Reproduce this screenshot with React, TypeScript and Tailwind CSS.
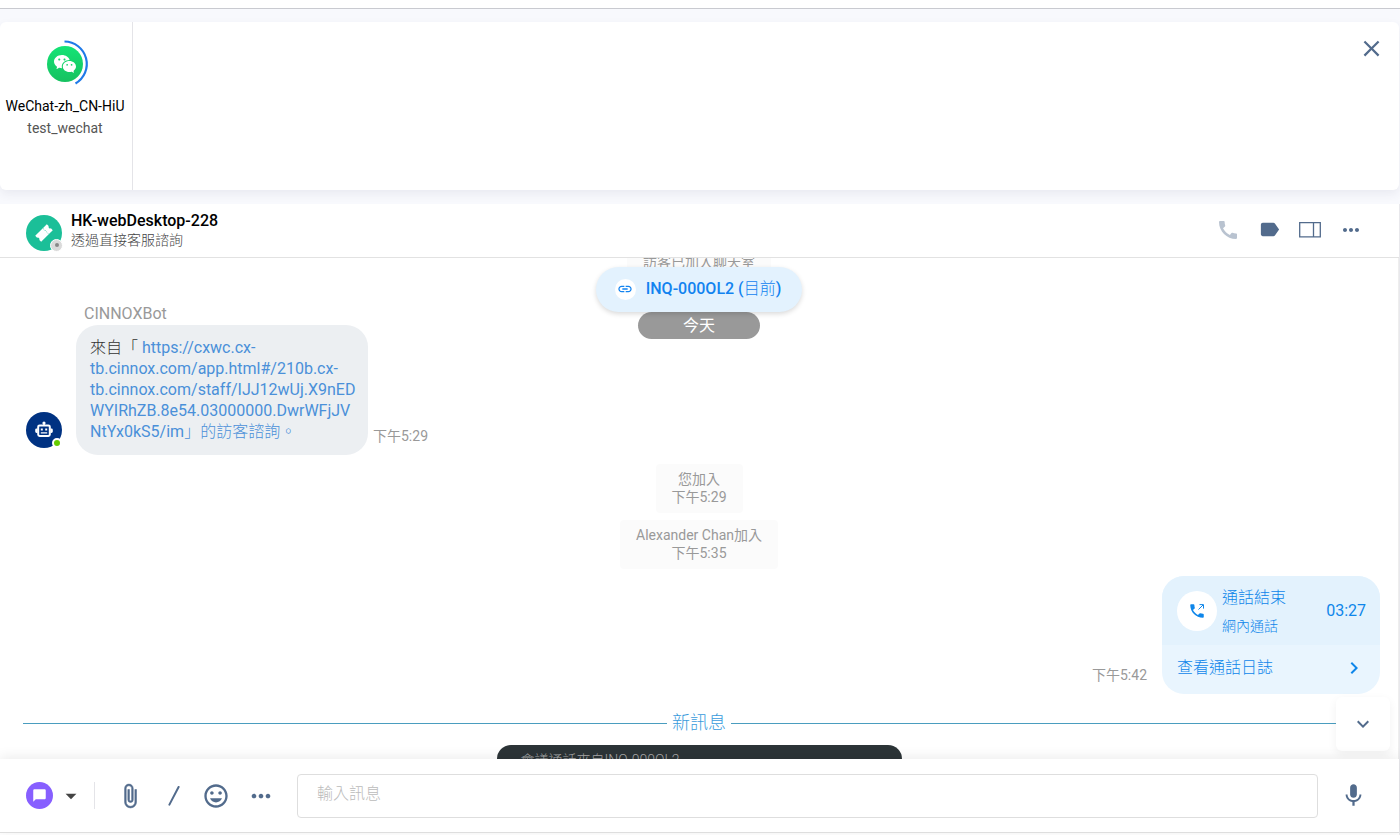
import type { FC, ReactNode } from "react";
import {
  MdArrowDropDown,
  MdCall,
  MdChatBubble,
  MdChevronRight,
  MdClose,
  MdKeyboardArrowDown,
  MdLabel,
  MdLink,
  MdMic,
  MdMoreHoriz,
  MdOutlineMood,
  MdPhone,
} from "react-icons/md";
import { RiWechatFill } from "react-icons/ri";

const IconButton: FC<{ label: string; className?: string; children: ReactNode }> = ({
  label,
  className = "",
  children,
}) => (
  <button
    type="button"
    aria-label={label}
    className={`flex shrink-0 items-center justify-center text-[#526b8c] ${className}`}
  >
    {children}
  </button>
);

const BotIcon: FC = () => (
  <svg width="20" height="20" viewBox="0 0 20 20" fill="none" aria-hidden="true">
    <circle cx="10" cy="3" r="1.6" fill="#fff" />
    <path d="M10 3v3" stroke="#fff" strokeWidth="1.6" />
    <rect x="4.2" y="5.4" width="11.6" height="10.6" rx="1.4" stroke="#fff" strokeWidth="2" />
    <path d="M3.6 8.4H2.6a1.4 1.4 0 0 0-1.4 1.4v1.8A1.4 1.4 0 0 0 2.6 13h1zM16.4 8.4h1a1.4 1.4 0 0 1 1.4 1.4v1.8a1.4 1.4 0 0 1-1.4 1.4h-1z" fill="#fff" />
    <path d="M6.8 8.4h2v2h-2zM11.2 8.4h2v2h-2zM6.8 12.2h6.4v1.4H6.8z" fill="#fff" />
  </svg>
);

const TicketIcon: FC = () => (
  <svg width="20" height="20" viewBox="0 0 20 20" aria-hidden="true">
    <g transform="rotate(-45 10 10)">
      <path d="M1.8 5.8h16.4v2.6a1.7 1.7 0 0 0 0 3.2v2.6H1.8v-2.6a1.7 1.7 0 0 0 0-3.2z" fill="#fff" />
      <path d="M12.6 6.4v7.2" stroke="#1bbf98" strokeWidth=".7" strokeDasharray="1.2 1" />
    </g>
  </svg>
);

const PanelIcon: FC = () => (
  <svg width="22" height="16" viewBox="0 0 22 16" fill="none" stroke="currentColor" aria-hidden="true">
    <path d="M.7.7h20.6v14.1H.7zM14.5.7v14.1" strokeWidth="1.3" />
  </svg>
);

const ClipIcon: FC = () => (
  <svg width="26" height="26" viewBox="0 0 24 24" fill="currentColor" stroke="currentColor" strokeWidth=".5" aria-hidden="true">
    <path d="M16.5 6v11.5c0 2.21-1.79 4-4 4s-4-1.79-4-4V5a2.5 2.5 0 0 1 5 0v10.5c0 .55-.45 1-1 1s-1-.45-1-1V6H10v9.5a2.5 2.5 0 0 0 5 0V5c0-2.21-1.79-4-4-4S7 2.79 7 5v12.5c0 3.04 2.46 5.5 5.5 5.5s5.5-2.46 5.5-5.5V6h-1.5z" />
  </svg>
);

/** Centered grey note: who joined, and when. */
const SystemNote: FC<{ text: string; time: string }> = ({ text, time }) => (
  <div className="self-center rounded bg-[#fbfbfb] px-4 pt-1.5 pb-[7px] text-center text-[14px] leading-[18px] text-[#999]">
    <p>{text}</p>
    <p>{time}</p>
  </div>
);

const ChannelCard: FC = () => (
  <section className="mr-px flex h-[168px] shrink-0 rounded-md bg-white shadow-[0_4px_10px_rgba(60,70,100,0.08)]">
    <div className="flex w-[133px] shrink-0 flex-col items-center border-r border-[#e4e4e8] pt-[17px] pr-[2px]">
      <div className="relative flex h-[50px] w-[50px] items-center justify-center">
        <div className="flex h-9 w-9 items-center justify-center rounded-full bg-gradient-to-b from-[#14e476] to-[#16c160]">
          <RiWechatFill className="h-6 w-6 text-white" />
        </div>
        <svg className="absolute inset-0" width="50" height="50" viewBox="0 0 50 50" fill="none" aria-hidden="true">
          <path d="M24.5 2.5a22.5 22.5 0 0 1 11 42" stroke="#1f7ae8" strokeWidth="2.2" />
        </svg>
      </div>
      <p className="mt-[6px] text-[14px] leading-[22px] whitespace-nowrap text-black">WeChat-zh_CN-HiU</p>
      <p className="text-[14px] leading-[22px] text-[#555]">test_wechat</p>
    </div>
    <div className="flex flex-1 items-start justify-end pt-[13px] pr-[14px]">
      <IconButton label="關閉">
        <MdClose className="h-[27px] w-[27px]" />
      </IconButton>
    </div>
  </section>
);

const ChatHeader: FC = () => (
  <header className="flex h-[54px] shrink-0 items-center border-b border-[#e2e2e2] pr-[36px] pl-[26px]">
    <div className="relative mt-1 flex h-9 w-9 items-center justify-center rounded-full bg-[#1bbf98]">
      <TicketIcon />
      <span className="absolute -right-px -bottom-px flex h-[13px] w-[13px] items-center justify-center rounded-full border border-white bg-[#dadada]">
        <span className="h-1 w-1 rounded-full bg-[#888]" />
      </span>
    </div>
    <div className="ml-[9px] flex-1 pb-[2px]">
      <h1 className="text-[16px] leading-5 font-medium text-black">HK-webDesktop-228</h1>
      <p className="text-[14px] leading-[18px] font-light text-[#444]">透過直接客服諮詢</p>
    </div>
    <div className="flex items-center gap-[17px] pb-[2px]">
      <IconButton label="通話" className="w-6 opacity-40">
        <MdCall className="h-6 w-6" />
      </IconButton>
      <IconButton label="標籤" className="w-6">
        <MdLabel className="h-[23px] w-[23px]" />
      </IconButton>
      <IconButton label="側欄" className="w-6">
        <PanelIcon />
      </IconButton>
      <IconButton label="更多" className="w-6">
        <MdMoreHoriz className="h-6 w-6" />
      </IconButton>
    </div>
  </header>
);

const BotMessage: FC = () => (
  <article className="mb-[2px] flex items-end pl-[26px]">
    <div className="relative mb-[7px] flex h-9 w-9 items-center justify-center rounded-full bg-[#003282]">
      <BotIcon />
      <span className="absolute right-0 bottom-0 h-[10px] w-[10px] rounded-full border-2 border-white bg-[#6c0]" />
    </div>
    <div className="ml-[14px]">
      <p className="pl-2 text-[16px] leading-[22px] text-[#999]">CINNOXBot</p>
      <div className="w-[292px] rounded-[22px] bg-[#eceff2] px-[14px] pt-3 pb-[13px] text-[16px] leading-[21px] whitespace-nowrap">
        <span className="font-light text-[#333]">來自「 </span>
        <a href="#inquiry" className="text-[#4a90d9]">
          https://cxwc.cx-
          <br />
          tb.cinnox.com/app.html#/210b.cx-
          <br />
          tb.cinnox.com/staff/IJJ12wUj.X9nED
          <br />
          WYIRhZB.8e54.03000000.DwrWFjJV
          <br />
          NtYx0kS5/im<span className="font-light">」的訪客諮詢。</span>
        </a>
      </div>
    </div>
    <time className="mb-[9px] ml-[5px] text-[14px] leading-5 text-[#999]">下午5:29</time>
  </article>
);

const CallMessage: FC = () => (
  <article className="flex items-end justify-end pr-[18px]">
    <time className="mr-[15px] mb-[9px] text-[14px] leading-5 text-[#999]">下午5:42</time>
    <div className="w-[218px] overflow-hidden rounded-[22px] bg-[#e9f5fe] text-[16px] text-[#0e86ea]">
      <div className="flex h-[69px] items-center bg-[#e3f2fd] pt-px pr-[14px] pl-[15px]">
        <div className="flex h-10 w-10 items-center justify-center rounded-full bg-white">
          <svg width="18" height="18" viewBox="0 0 18 18" aria-hidden="true">
            <MdPhone size={18} />
            <path d="M10.5 7.5 15 3M11.5 2.6h4v4" fill="none" stroke="currentColor" strokeWidth="1" />
          </svg>
        </div>
        <div className="ml-[5px] flex-1 pt-[2px]">
          <p className="leading-7 font-light">通話結束</p>
          <p className="text-[14px] leading-7 font-light">網內通話</p>
        </div>
        <span>03:27</span>
      </div>
      <button type="button" className="flex h-[49px] w-full items-center justify-between pr-[14px] pb-[3px] pl-[15px] font-light">
        查看通話日誌
        <MdChevronRight className="h-6 w-6" />
      </button>
    </div>
  </article>
);

const Composer: FC = () => (
  <form className="relative flex h-[74px] shrink-0 items-center border-b border-[#dedede] bg-white pr-[32px] pl-[26px] shadow-[0_-2px_12px_rgba(0,0,0,0.08)]">
    <button type="button" aria-label="訊息類型" className="flex items-center">
      <span className="flex h-[27px] w-[27px] items-center justify-center rounded-full bg-[#875fff]">
        <MdChatBubble className="h-[15px] w-[15px] text-white" />
      </span>
      <MdArrowDropDown className="ml-[5px] h-[26px] w-[26px] text-[#444]" />
    </button>
    <span className="ml-[10px] h-[27px] w-px bg-[#e4e4e8]" />
    <IconButton label="附加檔案" className="ml-[22px] w-[26px]">
      <ClipIcon />
    </IconButton>
    <IconButton label="指令" className="ml-[18px] w-[26px]">
      <svg width="12" height="20" viewBox="0 0 12 20" aria-hidden="true">
        <path d="M1.4 18.6 10.6 1" stroke="currentColor" strokeWidth="2" strokeLinecap="round" />
      </svg>
    </IconButton>
    <IconButton label="表情符號" className="ml-[15px] w-7">
      <MdOutlineMood className="h-7 w-7" />
    </IconButton>
    <IconButton label="更多選項" className="ml-[17px] w-7">
      <MdMoreHoriz className="h-7 w-7" />
    </IconButton>
    <input
      type="text"
      aria-label="輸入訊息"
      placeholder="輸入訊息"
      className="ml-[22px] h-11 min-w-0 flex-1 rounded border border-[#dedede] px-[19px] pb-[4px] text-[16px] font-light outline-none placeholder:text-[#bbb]"
    />
    <IconButton label="語音" className="ml-[22px] w-[27px]">
      <MdMic className="h-[27px] w-[27px]" />
    </IconButton>
  </form>
);

const App: FC = () => {
  return (
    <main className="flex h-screen flex-col overflow-hidden bg-[#f8f9fd] font-['Roboto','Noto_Sans_CJK_TC',sans-serif]">
      <div className="mb-[13px] h-[9px] shrink-0 border-b border-[#c9cad0] bg-white" />
      <ChannelCard />

      <section className="mt-[14px] flex min-h-0 flex-1 flex-col border-r border-[#e8e8ec] bg-white pb-[2px]">
        <ChatHeader />

        <div className="relative flex min-h-0 flex-1 flex-col overflow-hidden border-r border-[#eee]">
          <div className="-mt-[11px] flex shrink-0 flex-col gap-[7px]">
            <SystemNote text="訪客已加入聊天室" time="下午5:29" />
            <BotMessage />
            <SystemNote text="您加入" time="下午5:29" />
            <SystemNote text="Alexander Chan加入" time="下午5:35" />
            <CallMessage />
            <div className="mx-[23px] mt-[10px] flex items-center gap-[5px] text-[18px] leading-6 font-light text-[#3a9bdc]">
              <span className="h-px flex-1 bg-[#4a9dbf]" />
              新訊息
              <span className="h-px flex-1 bg-[#4a9dbf]" />
            </div>
            <div className="mt-[3px] h-24 w-[405px] self-center rounded-[14px] bg-[#2c3437] px-6 pt-[6px] text-[14px] leading-[18px] font-light text-[#aaa]">
              會議通話來自INQ-000OL2
            </div>
          </div>

          <div className="absolute inset-x-0 top-[9px] flex flex-col items-center">
            <button
              type="button"
              className="z-10 flex h-[45px] items-center rounded-full bg-[#e3f2fe] pr-[21px] pb-px pl-[19px] text-[16px] font-medium text-[#1283f0] shadow-[0_2px_5px_rgba(0,0,0,0.15)]"
            >
              <span className="mr-[10px] flex h-[21px] w-[21px] items-center justify-center rounded-full bg-white">
                <MdLink className="h-4 w-4" />
              </span>
              <span>
                INQ-000OL2 (<span className="font-light">目前</span>)
              </span>
            </button>
            <span className="flex h-[27px] w-[122px] items-center justify-center rounded-full bg-[#999] text-[16px] text-white">
              今天
            </span>
          </div>

          <button
            type="button"
            aria-label="捲動到最新訊息"
            className="absolute right-2 bottom-2 flex h-[54px] w-[54px] items-center justify-center rounded-md bg-white text-[#526b8c] shadow-[0_3px_10px_rgba(0,0,0,0.06)]"
          >
            <MdKeyboardArrowDown className="h-6 w-6" />
          </button>
        </div>

        <Composer />
      </section>
    </main>
  );
};

export default App;
